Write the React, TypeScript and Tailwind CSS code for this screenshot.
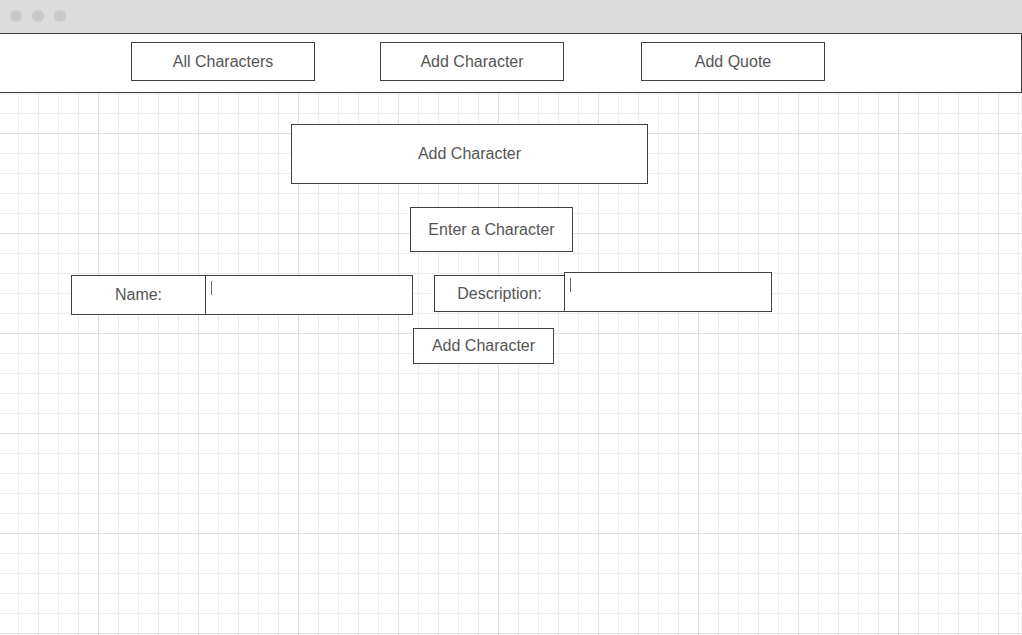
import clsx from 'clsx';

const FONT = "font-['Liberation_Sans',Arial,sans-serif]";

const navItems = [
  { label: 'All Characters', offset: 'ml-[131px]' },
  { label: 'Add Character', offset: 'ml-[65px]' },
  { label: 'Add Quote', offset: 'ml-[77px]' },
];

export default function App() {
  return (
    <div
      className={clsx(
        'relative w-[1022px] h-[635px] overflow-hidden bg-white',
        FONT,
        'text-[16px] text-[#555555]',
        '[background-image:linear-gradient(to_right,#e0e0e0_1px,transparent_1px),linear-gradient(to_bottom,#e0e0e0_1px,transparent_1px),linear-gradient(to_right,#ededed_1px,transparent_1px),linear-gradient(to_bottom,#ededed_1px,transparent_1px)]',
        '[background-size:100px_100px,100px_100px,20px_20px,20px_20px]',
        '[background-position:98px_33px,98px_33px,18px_13px,18px_13px]'
      )}
    >
      <TitleBar />
      <NavBar />
      <AddCharacterForm />
    </div>
  );
}

function TitleBar() {
  return (
    <div className="flex h-[33px] items-start gap-[10px] bg-[#dcdcdc] pl-[10px] pt-[10px]">
      <span className="size-[12px] rounded-full bg-[#cacaca]" />
      <span className="size-[12px] rounded-full bg-[#cacaca]" />
      <span className="size-[12px] rounded-full bg-[#cacaca]" />
    </div>
  );
}

function NavBar() {
  const menu = navItems.map((e) => {
    return (
      <BoxText key={e.label} className={clsx(e.offset, 'w-[184px] h-[39px]')}>
        {e.label}
      </BoxText>
    );
  });
  return (
    <div className="-ml-px flex h-[60px] w-[1023px] items-start border border-[#404040] bg-white pt-[8px]">
      {menu}
    </div>
  );
}

function AddCharacterForm() {
  return (
    <div className="flex flex-col items-start">
      <BoxText className="ml-[291px] mt-[31px] w-[357px] h-[60px]">
        Add Character
      </BoxText>
      <BoxText className="ml-[410px] mt-[23px] w-[163px] h-[45px]">
        Enter a Character
      </BoxText>
      <div className="mt-[20px] flex items-start">
        <div className="ml-[71px] mt-[3px] flex">
          <BoxText className="w-[135px] h-[40px]">Name:</BoxText>
          <InputBox className="-ml-px h-[40px]" />
        </div>
        <div className="ml-[21px] flex items-start">
          <BoxText className="mt-[3px] w-[131px] h-[37px]">Description:</BoxText>
          <InputBox className="-ml-px h-[40px]" />
        </div>
      </div>
      <BoxText className="ml-[413px] mt-[13px] w-[141px] h-[36px]">
        Add Character
      </BoxText>
    </div>
  );
}

function BoxText({
  className,
  children,
}: {
  className?: string;
  children: React.ReactNode;
}) {
  return (
    <div
      className={clsx(
        'flex shrink-0 items-center justify-center border border-[#404040] bg-white leading-none',
        className
      )}
    >
      <span>{children}</span>
    </div>
  );
}

function InputBox({ className }: { className?: string }) {
  return (
    <div
      className={clsx(
        'shrink-0 w-[208px] border border-[#404040] bg-white pl-[5px] pt-[5px]',
        className
      )}
    >
      <span className="block h-[14px] w-px bg-[#666666]" />
    </div>
  );
}
